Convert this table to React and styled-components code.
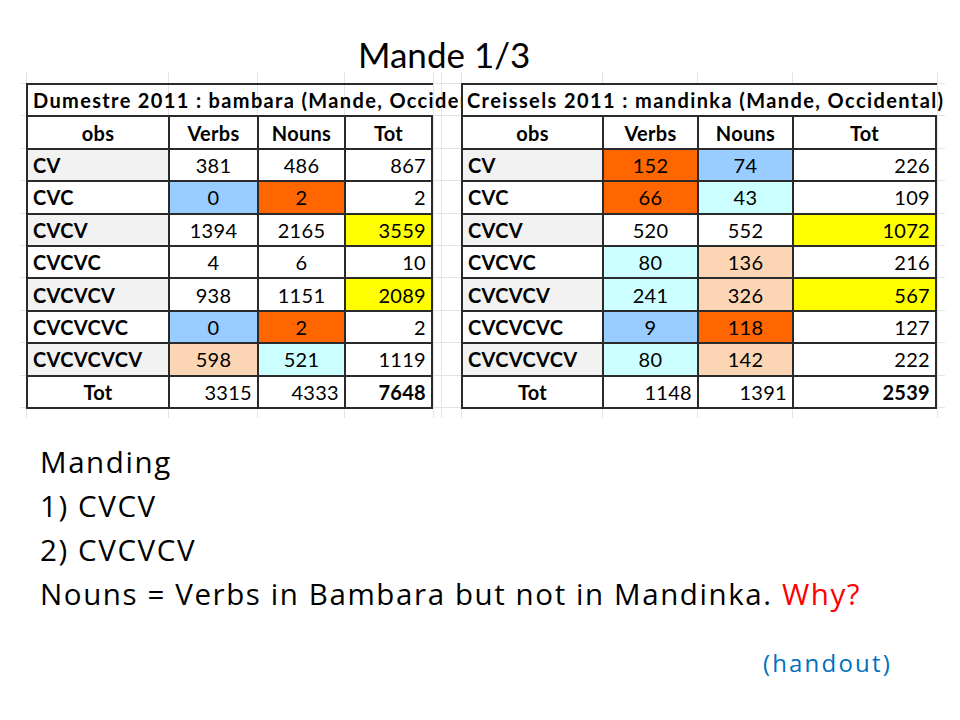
import React from "react";
import styled, { createGlobalStyle } from "styled-components";

const Global = createGlobalStyle`
  html, body { margin: 0; padding: 0; background: #fff; }
  body { font-family: Lato, "Open Sans", sans-serif; color: #000; }
`;

const C = {
  blue: "#99ccff",
  orange: "#ff6600",
  yellow: "#ffff00",
  peach: "#fcd5b4",
  cyan: "#ccffff",
  gray: "#f2f2f2",
};

const Slide = styled.div`
  width: 960px;
  height: 720px;
  box-sizing: border-box;
  padding-top: 36px;
  overflow: hidden;
  display: flex;
  flex-direction: column;
`;

const Title = styled.h1`
  margin: 0;
  padding-left: 358px;
  font-weight: 400;
  font-size: 35px;
  line-height: 36px;
`;

const vLines = [6, 148, 237, 324, 413, 421, 441, 582, 677, 772, 917];

const Sheet = styled.div`
  margin-left: 20px;
  width: 925px;
  box-sizing: border-box;
  padding: 11px 7px 9px 6px;
  display: flex;
  background-color: #fff;
  background-image: ${vLines.map(() => "linear-gradient(#e4e4e4, #e4e4e4)").join(", ")},
    repeating-linear-gradient(to bottom, #e4e4e4 0 1px, transparent 1px 32.4px);
  background-size: ${vLines.map(() => "1px 100%").join(", ")}, 100% 100%;
  background-position: ${vLines.map((x) => `${x}px 0`).join(", ")}, 0 11px;
  background-repeat: no-repeat;
`;

const Table = styled.div`
  display: grid;
  grid-template-columns: ${(p) => p.$cols};
  grid-template-rows: repeat(10, 32.4px);
  border-left: 2px solid #2a2a2a;
  border-top: 2px solid #2a2a2a;
  margin-right: ${(p) => p.$gap || 0}px;
  font-size: 20px;
  letter-spacing: 0.3px;
`;

const Caption = styled.div`
  grid-column: 1 / -1;
  box-sizing: border-box;
  border-bottom: 2px solid #2a2a2a;
  background: ${(p) => (p.$opaque ? "#fff" : "transparent")};
  font-weight: 700;
  letter-spacing: ${(p) => p.$spacing}px;
  white-space: nowrap;
  display: flex;
  align-items: center;
  position: relative;
  z-index: ${(p) => (p.$opaque ? 1 : 0)};
`;

const CaptionText = styled.span`
  display: block;
  flex-shrink: 0;
  box-sizing: border-box;
  padding-left: ${(p) => p.$pad}px;
  width: ${(p) => (p.$clip ? `calc(100% + ${p.$clip}px)` : "auto")};
  overflow: ${(p) => (p.$clip ? "hidden" : "visible")};
`;

const Cell = styled.div`
  box-sizing: border-box;
  border-right: 2px solid #2a2a2a;
  border-bottom: 2px solid #2a2a2a;
  background: ${(p) => p.$bg || "#fff"};
  font-weight: ${(p) => (p.$bold ? 700 : 400)};
  display: flex;
  align-items: center;
  justify-content: ${(p) =>
    p.$align === "left" ? "flex-start" : p.$align === "right" ? "flex-end" : "center"};
  padding: 0 5px;
  white-space: nowrap;
`;

const Body = styled.div`
  margin-top: 22px;
  padding-left: 40px;
  font-family: "Open Sans", Lato, sans-serif;
  font-size: 29.5px;
  line-height: 44px;
  letter-spacing: 1.6px;
`;

const Line = styled.div``;

const Red = styled.span`
  color: #ff0000;
`;

const Handout = styled.div`
  margin-top: 32px;
  padding-right: 68px;
  text-align: right;
  font-family: "Open Sans", Lato, sans-serif;
  color: #0070c0;
  font-size: 24px;
  line-height: 30px;
  letter-spacing: 2.2px;
`;

const leftData = [
  ["CV", [381], [486], [867]],
  ["CVC", [0, C.blue], [2, C.orange], [2]],
  ["CVCV", [1394], [2165], [3559, C.yellow]],
  ["CVCVC", [4], [6], [10]],
  ["CVCVCV", [938], [1151], [2089, C.yellow]],
  ["CVCVCVC", [0, C.blue], [2, C.orange], [2]],
  ["CVCVCVCV", [598, C.peach], [521, C.cyan], [1119]],
];

const rightData = [
  ["CV", [152, C.orange], [74, C.blue], [226]],
  ["CVC", [66, C.orange], [43, C.cyan], [109]],
  ["CVCV", [520], [552], [1072, C.yellow]],
  ["CVCVC", [80, C.cyan], [136, C.peach], [216]],
  ["CVCVCV", [241, C.cyan], [326, C.peach], [567, C.yellow]],
  ["CVCVCVC", [9, C.blue], [118, C.orange], [127]],
  ["CVCVCVCV", [80, C.cyan], [142, C.peach], [222]],
];

function DataTable({ caption, cols, rows, totals, gap, opaque, pad, clip, spacing }) {
  return (
    <Table $cols={cols} $gap={gap}>
      <Caption $opaque={opaque} $spacing={spacing}>
        <CaptionText $pad={pad} $clip={clip}>
          {caption}
        </CaptionText>
      </Caption>
      {["obs", "Verbs", "Nouns", "Tot"].map((h) => (
        <Cell key={h} $bold>
          {h}
        </Cell>
      ))}
      {rows.map(([label, v, n, t], i) => (
        <React.Fragment key={label}>
          <Cell $bold $align="left" $bg={i % 2 === 0 ? C.gray : "#fff"}>
            {label}
          </Cell>
          <Cell $bg={v[1]}>{v[0]}</Cell>
          <Cell $bg={n[1]}>{n[0]}</Cell>
          <Cell $bg={t[1]} $align="right">
            {t[0]}
          </Cell>
        </React.Fragment>
      ))}
      <Cell $bold>Tot</Cell>
      <Cell $align="right">{totals[0]}</Cell>
      <Cell $align="right">{totals[1]}</Cell>
      <Cell $align="right" $bold>
        {totals[2]}
      </Cell>
    </Table>
  );
}

export default function App() {
  return (
    <>
      <Global />
      <Slide>
        <Title>Mande 1/3</Title>
        <Sheet>
          <DataTable
            caption="Dumestre 2011 : bambara (Mande, Occidental)"
            cols="142px 89px 87px 87px"
            rows={leftData}
            totals={[3315, 4333, 7648]}
            gap={28}
            pad={5}
            clip={28}
            spacing={1.35}
          />
          <DataTable
            caption="Creissels 2011 : mandinka (Mande, Occidental)"
            cols="141px 95px 95px 143px"
            rows={rightData}
            totals={[1148, 1391, 2539]}
            opaque
            pad={4}
            spacing={1.4}
          />
        </Sheet>
        <Body>
          <Line>Manding</Line>
          <Line>1) CVCV</Line>
          <Line>2) CVCVCV</Line>
          <Line>
            Nouns = Verbs in Bambara but not in Mandinka. <Red>Why?</Red>
          </Line>
        </Body>
        <Handout>(handout)</Handout>
      </Slide>
    </>
  );
}
